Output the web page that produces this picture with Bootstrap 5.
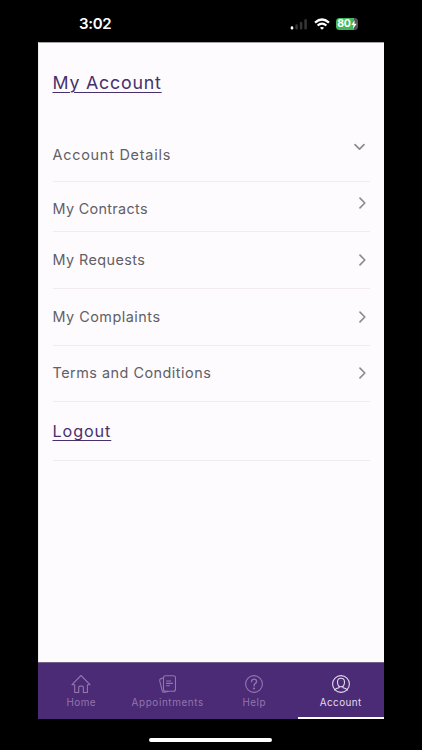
<!DOCTYPE html>
<html lang="en">
<head>
<meta charset="utf-8">
<meta name="viewport" content="width=device-width, initial-scale=1">
<title>My Account</title>
<link href="https://cdn.jsdelivr.net/npm/bootstrap@5.3.0/dist/css/bootstrap.min.css" rel="stylesheet">
<style>
body{font-family:Inter,"Open Sans",sans-serif;background:#000;color:#56545a}
.phone{width:422px;height:750px}
.status{height:42px;padding:6px 64px 0 79px}
.clock{font-size:15px;letter-spacing:-.35px}
.signal{margin-right:6px}
.wifi{margin-right:6px}
.battery{width:22px;height:12px;border-radius:3.5px;background:linear-gradient(90deg,#43b75b 80%,#535355 80%);font-size:10.5px;line-height:12px;letter-spacing:-.2px}
.screen{width:346px;height:677px;background:#fefbfe;border-top:1px solid #a6a4a7;border-left:1px solid #eeeaef}
.content{padding:0 14px 0 13.5px}
.heading{height:83px;padding-top:26px;font-size:17.8px;line-height:28px;letter-spacing:.79px}
.account-link{color:#47306c;text-decoration-thickness:1px;text-underline-offset:2.5px}
.entry{border-bottom:1px solid #f1ebf0;font-size:14.4px;line-height:20px;letter-spacing:.42px;color:#616065}
.entry svg,.tab svg,.status svg{fill:none;stroke:currentColor;stroke-linecap:round;stroke-linejoin:round}
.entry svg{color:#8d8a90;stroke-width:1.7;margin-right:1px}
.entry .down{margin:0 4.5px 16px 0}
.entry .raised{margin-bottom:11px}
.h-details{height:56px;padding-top:3px}
.h-contracts{height:50px;padding-top:4px}
.h-regular{height:56.8px}
.h-logout{height:58.4px}
.label-details{letter-spacing:.77px}
.label-short{letter-spacing:.33px}
.label-long{letter-spacing:.5px}
.logout{font-size:16.2px;letter-spacing:.9px}
.tabs{height:57px;background:#4b2b76;border-top:1px solid #756187;margin-left:-1px}
.tab{color:#9475ad;font-size:9.9px;line-height:12px;letter-spacing:.45px;padding-top:11px;border-bottom:2px solid transparent}
.tab svg{stroke-width:1.1;margin-bottom:1.5px}
.tab .wide{letter-spacing:.62px}
.tab.current{color:#e5daed;border-color:#fff}
.home-bar{width:123px;height:4px;margin:19px 0 0 149px}
</style>
<script src="https://cdn.jsdelivr.net/npm/bootstrap@5.3.0/dist/js/bootstrap.bundle.min.js"></script>
</head>
<body class="overflow-hidden">
<div class="phone">
  <header class="status d-flex justify-content-between align-items-center text-white">
    <span class="clock fw-semibold">3:02</span>
    <div class="d-flex align-items-center">
      <svg class="signal" width="18" height="12" viewBox="0 0 18 12"><g stroke-width="2.6"><path d="M2 9.6v.6"/><path stroke="#343437" d="M6.6 7.6v2.6M11.1 5v5.2M15.6 2.4v7.8"/></g></svg>
      <svg class="wifi" width="16" height="13" viewBox="0 0 16 13"><g stroke-width="2.2" stroke-linecap="butt"><path d="M1 4.6q7-6.2 14 0M3.6 7.5q4.4-3.8 8.8 0"/></g><path d="M5.9 9.7q2.1-1.6 4.2 0L8 11.8z" fill="#fff" stroke="none"/></svg>
      <div class="battery fw-bold d-flex align-items-center justify-content-center"><span>80</span><svg width="6" height="9" viewBox="0 0 6 9"><path d="M3.7.2.3 5h2.2L2 8.8 5.7 3.8H3.4z" fill="#fff" stroke="none"/></svg></div>
    </div>
  </header>
  <div class="screen d-flex flex-column mx-auto">
    <main class="content flex-grow-1">
      <h1 class="heading fw-normal mb-0"><a href="#" class="account-link">My Account</a></h1>
      <nav>
        <div class="entry h-details d-flex align-items-center justify-content-between"><span class="label-details">Account Details</span><svg class="down" width="13" height="10" viewBox="0 0 13 10"><path d="m2 2.7 4.5 4.5L11 2.7"/></svg></div>
        <div class="entry h-contracts d-flex align-items-center justify-content-between"><span class="label-short">My Contracts</span><svg class="raised" width="13" height="14" viewBox="0 0 13 14"><path d="m4 2.2 4.8 4.8L4 11.8"/></svg></div>
        <div class="entry h-regular d-flex align-items-center justify-content-between"><span>My Requests</span><svg width="13" height="14" viewBox="0 0 13 14"><path d="m4 2.2 4.8 4.8L4 11.8"/></svg></div>
        <div class="entry h-regular d-flex align-items-center justify-content-between"><span class="label-long">My Complaints</span><svg width="13" height="14" viewBox="0 0 13 14"><path d="m4 2.2 4.8 4.8L4 11.8"/></svg></div>
        <div class="entry h-regular d-flex align-items-center justify-content-between"><span class="label-long">Terms and Conditions</span><svg width="13" height="14" viewBox="0 0 13 14"><path d="m4 2.2 4.8 4.8L4 11.8"/></svg></div>
        <div class="entry h-logout d-flex align-items-center"><a href="#" class="account-link logout">Logout</a></div>
      </nav>
    </main>
    <nav class="tabs row g-0 flex-shrink-0 text-center">
      <div class="tab col-3 d-flex flex-column align-items-center"><svg width="20" height="20" viewBox="0 0 20 20"><path d="M1 10.7 10 1.5l9 9.2h-2.6v7.8h-4v-5.2q0-1.2-1.2-1.2H9q-1.3 0-1.3 1.2v5.2h-4v-7.8z"/></svg><span>Home</span></div>
      <div class="tab col-3 d-flex flex-column align-items-center"><svg width="20" height="20" viewBox="0 0 20 20"><rect x="5.5" y="1.8" width="12" height="15.4" rx="2"/><path d="M5.3 4 3 4.6q-1.6.4-1.3 2l2.5 10.2q.4 1.8 2.2 1.4l3.6-.8M8.5 7h4.2M8.5 9.4h6M8.5 11.8h3"/></svg><span class="wide">Appointments</span></div>
      <div class="tab col-3 d-flex flex-column align-items-center"><svg width="20" height="20" viewBox="0 0 20 20"><circle cx="10" cy="10" r="8.4"/><path stroke-width="1.3" d="M7.5 7.6q.2-2.5 2.6-2.5t2.5 2.3q0 1.2-1.5 2.2Q10 10.4 10 12"/><circle cx="10" cy="14.5" r=".5" fill="currentColor"/></svg><span>Help</span></div>
      <div class="tab current col-3 d-flex flex-column align-items-center"><svg width="20" height="20" viewBox="0 0 20 20"><circle cx="10" cy="10" r="8.4"/><path d="M10 4.2c-2.3 0-3.5 1.5-3.5 3.8 0 2.8 1.3 4.8 3.5 4.8s3.5-2 3.5-4.8c0-2.3-1.2-3.8-3.5-3.8zM8 12.3v1.5q-2.8.5-4.5 2M12 12.3v1.5q2.8.5 4.5 2"/></svg><span>Account</span></div>
    </nav>
  </div>
  <div class="home-bar bg-white rounded-pill"></div>
</div>
</body>
</html>
